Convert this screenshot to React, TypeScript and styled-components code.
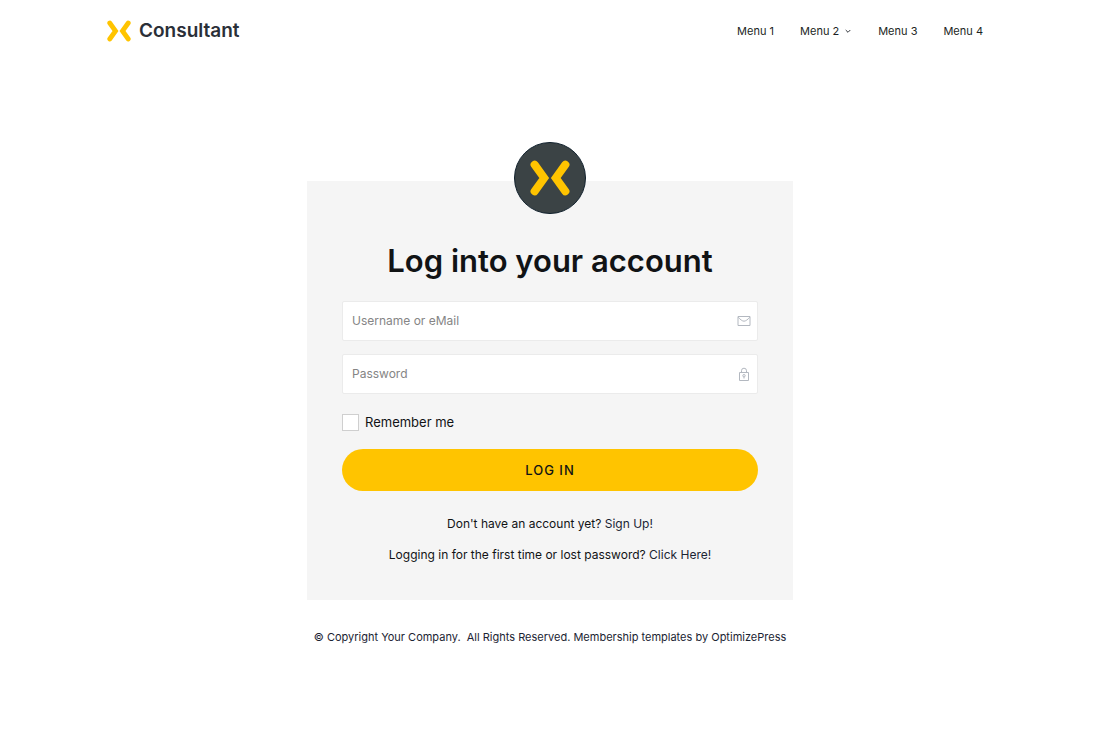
import React from "react";
import styled, { createGlobalStyle } from "styled-components";

const GlobalStyle = createGlobalStyle`
  *, *::before, *::after { box-sizing: border-box; }
  body {
    margin: 0;
    background: #ffffff;
    color: #111315;
    font-family: Inter, "Liberation Sans", sans-serif;
    font-size: 13px;
    line-height: 20px;
  }
`;

const Header = styled.header`
  display: flex;
  align-items: center;
  justify-content: space-between;
  flex-wrap: wrap;
  max-width: 900px;
  min-height: 62px;
  margin: 0 auto;
  padding: 0 17px 0 7px;
`;

const Brand = styled.a`
  display: flex;
  align-items: center;
  gap: 8px;
  color: #2a2f38;
  font-size: 19px;
  font-weight: 600;
  line-height: 24px;
  text-decoration: none;
`;

const Nav = styled.nav`
  display: flex;
  align-items: center;
  gap: 26px;
`;

const NavLink = styled.a`
  display: flex;
  align-items: center;
  gap: 5px;
  color: #1c1f24;
  font-size: 11px;
  line-height: 20px;
  text-decoration: none;
`;

const Main = styled.main`
  padding: 119px 16px 0;
`;

const Card = styled.section`
  display: flex;
  flex-direction: column;
  align-items: center;
  max-width: 486px;
  margin: 0 auto;
  padding: 0 35px 35px;
  background: #f5f5f5;
`;

const Badge = styled.div`
  display: flex;
  align-items: center;
  justify-content: center;
  width: 72px;
  height: 72px;
  margin-top: -39px;
  border: 1px solid #10202c;
  border-radius: 50%;
  background: #3b4345;
`;

const Title = styled.h1`
  margin: 27px 0 20px;
  font-size: 31px;
  font-weight: 600;
  line-height: 40px;
  text-align: center;
`;

const Form = styled.form`
  display: flex;
  flex-direction: column;
  width: 100%;
`;

const Field = styled.label`
  display: flex;
  align-items: center;
  height: 40px;
  margin-bottom: 13px;
  padding: 0 6px 0 9px;
  border: 1px solid #ebebeb;
  border-radius: 2px;
  background: #ffffff;
`;

const Input = styled.input`
  flex: 1;
  min-width: 0;
  padding: 0;
  border: 0;
  outline: 0;
  background: transparent;
  color: #111315;
  font: inherit;
  font-size: 12px;

  &::placeholder {
    color: #858585;
    opacity: 1;
  }
`;

const Remember = styled.label`
  display: flex;
  align-items: center;
  align-self: flex-start;
  gap: 6px;
  margin: 6px 0 18px;
  line-height: 18px;
`;

const Checkbox = styled.input`
  appearance: none;
  width: 17px;
  height: 17px;
  margin: 0;
  border: 1px solid #cfcfcf;
  background: #ffffff;

  &:checked {
    background: #ffc400;
  }
`;

const Submit = styled.button`
  height: 42px;
  border: 0;
  border-radius: 21px;
  background: #ffc400;
  color: #111315;
  font: inherit;
  font-weight: 500;
  letter-spacing: 1px;
  cursor: pointer;
`;

const Hint = styled.p<{ $gap: number }>`
  margin: ${({ $gap }) => $gap}px 0 0;
  font-size: 12px;
  text-align: center;
`;

const TextLink = styled.a`
  color: #1b2433;
  text-decoration: none;
`;

const Footer = styled.footer`
  padding: 27px 16px;
  color: #1b2433;
  font-size: 11px;
  text-align: center;
`;

const Mark = ({ width, height }: { width: number; height: number }) => (
  <svg width={width} height={height} viewBox="0 0 40 36" fill="none" aria-hidden="true">
    <g stroke="#ffc400" strokeWidth="8" strokeLinecap="round" strokeLinejoin="miter">
      <path d="M4.6 4.7 14.2 18 4.6 31.3" />
      <path d="M35.4 4.7 25.8 18 35.4 31.3" />
    </g>
  </svg>
);

const ChevronIcon = () => (
  <svg width="8" height="8" viewBox="0 0 8 8" fill="none" stroke="#33373d" aria-hidden="true">
    <path d="M1.7 3 4 5.3 6.3 3" />
  </svg>
);

const MailIcon = () => (
  <svg width="14" height="14" viewBox="0 0 14 14" fill="none" stroke="#b3b8c0" aria-hidden="true">
    <path d="M1 2.5h12v9H1z" />
    <path d="M1.3 3.2C3 5.4 5.4 7.2 7 7.2s4-1.8 5.7-4" />
  </svg>
);

const LockIcon = () => (
  <svg width="14" height="14" viewBox="0 0 14 14" fill="none" stroke="#b3b8c0" aria-hidden="true">
    <path d="M2.5 5.5h9v8h-9z" />
    <path d="M4.500 5.500V3.700a2.500 2.500 0 0 1 5 0v1.800" />
    <circle cx="7" cy="8.700" r="1.200" />
    <path d="M7 9.800v1.700" />
  </svg>
);

export default function App() {
  return (
    <>
      <GlobalStyle />
      <Header>
        <Brand href="#">
          <Mark width={24} height={22} />
          Consultant
        </Brand>
        <Nav aria-label="Main">
          <NavLink href="#">Menu 1</NavLink>
          <NavLink href="#">
            Menu 2
            <ChevronIcon />
          </NavLink>
          <NavLink href="#">Menu 3</NavLink>
          <NavLink href="#">Menu 4</NavLink>
        </Nav>
      </Header>
      <Main>
        <Card>
          <Badge>
            <Mark width={40} height={36} />
          </Badge>
          <Title>Log into your account</Title>
          <Form onSubmit={(event) => event.preventDefault()}>
            <Field>
              <Input type="text" name="username" placeholder="Username or eMail" aria-label="Username or eMail" />
              <MailIcon />
            </Field>
            <Field>
              <Input type="password" name="password" placeholder="Password" aria-label="Password" />
              <LockIcon />
            </Field>
            <Remember>
              <Checkbox type="checkbox" name="remember" />
              Remember me
            </Remember>
            <Submit type="submit">LOG IN</Submit>
          </Form>
          <Hint $gap={23}>
            Don't have an account yet? <TextLink href="#">Sign Up!</TextLink>
          </Hint>
          <Hint $gap={11}>
            Logging in for the first time or lost password? <TextLink href="#">Click Here!</TextLink>
          </Hint>
        </Card>
      </Main>
      <Footer>
        © Copyright Your Company.&nbsp; All Rights Reserved. Membership templates by{" "}
        <TextLink href="#">OptimizePress</TextLink>
      </Footer>
    </>
  );
}
